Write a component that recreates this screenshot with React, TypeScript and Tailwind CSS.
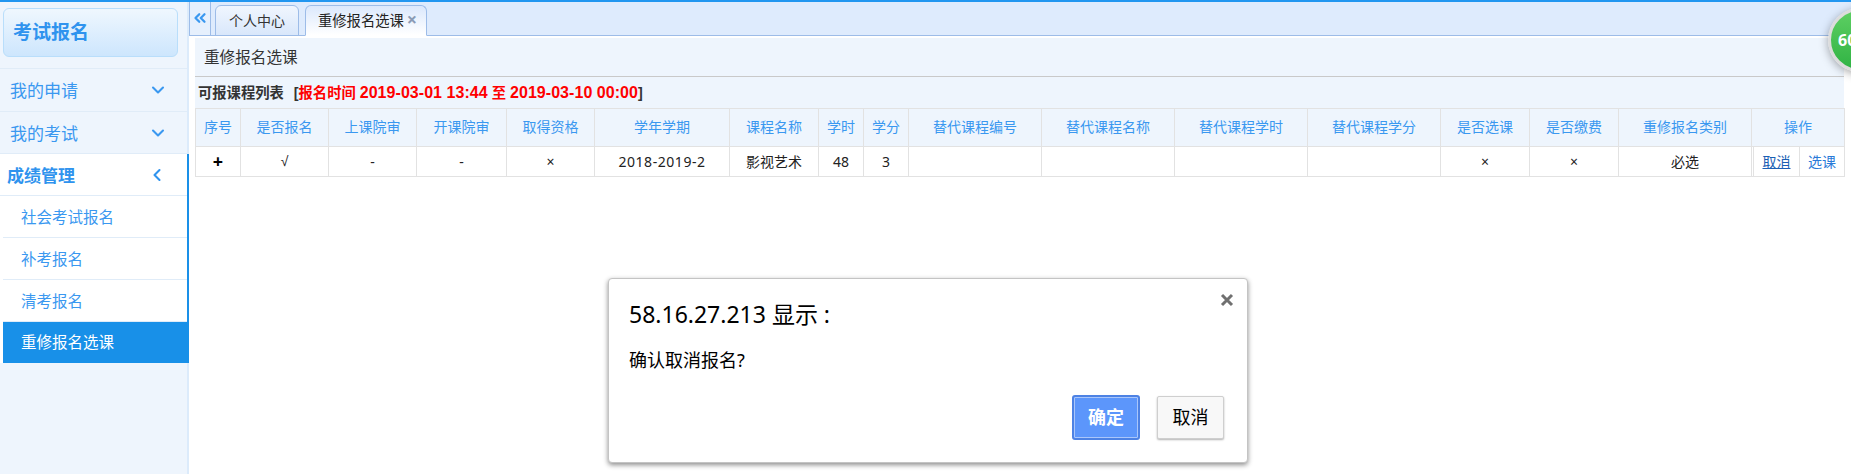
import { ChevronDown, ChevronLeft, ChevronsLeft } from 'lucide-react';

const columns = [
  { title: '序号', width: 'w-[45px]' },
  { title: '是否报名', width: 'w-[88px]' },
  { title: '上课院审', width: 'w-[88px]' },
  { title: '开课院审', width: 'w-[90px]' },
  { title: '取得资格', width: 'w-[88px]' },
  { title: '学年学期', width: 'w-[135px]' },
  { title: '课程名称', width: 'w-[89px]' },
  { title: '学时', width: 'w-[45px]' },
  { title: '学分', width: 'w-[45px]' },
  { title: '替代课程编号', width: 'w-[133px]' },
  { title: '替代课程名称', width: 'w-[133px]' },
  { title: '替代课程学时', width: 'w-[133px]' },
  { title: '替代课程学分', width: 'w-[133px]' },
  { title: '是否选课', width: 'w-[89px]' },
  { title: '是否缴费', width: 'w-[89px]' },
  { title: '重修报名类别', width: 'w-[133px]' },
  { title: '操作', width: 'w-[93px]' },
];

const row = ['-', '-', '×'];
const rowRest = ['影视艺术', '48', '3', '', '', '', '', '×', '×', '必选'];

const subMenu = ['社会考试报名', '补考报名', '清考报名'];

function Sidebar() {
  return (
    <aside className="w-[189px] shrink-0 bg-[#eef5fd] border-r-2 border-[#dcebfb] flex flex-col">
      <div className="h-[67px] pl-[3px] pr-[9px] pt-[6px] border-b border-[#e0ecf8]">
        <div className="h-[49px] flex items-center pl-[9px] rounded-md border border-[#b9defb] bg-gradient-to-b from-[#eff7fe] to-[#cde6fd] text-[19px] font-bold text-[#2f93ee]">
          考试报名
        </div>
      </div>
      <div className="h-[43px] flex items-center justify-between pl-[10px] pr-[19px] border-b border-[#e0ecf8] text-[17px] text-[#3a98f0]">
        <span className="pt-[2px]">我的申请</span>
        <ChevronDown className="w-[20px] h-[20px]" strokeWidth={2.5} />
      </div>
      <div className="h-[42px] flex items-center justify-between pl-[10px] pr-[19px] border-b border-[#e0ecf8] text-[17px] text-[#3a98f0]">
        <span className="pt-[2px]">我的考试</span>
        <ChevronDown className="w-[20px] h-[20px]" strokeWidth={2.5} />
      </div>
      <div className="border-r-2 border-[#1a90e8] -mr-[2px] bg-white">
        <div className="h-[42px] flex items-center justify-between pl-[7px] pr-[20px] border-b border-[#e0ecf8] text-[17px] font-bold text-[#2f93ee]">
          <span className="pt-[2px]">成绩管理</span>
          <ChevronLeft className="w-[20px] h-[20px]" strokeWidth={2.5} />
        </div>
        {subMenu.map((item) => (
          <div key={item} className="ml-[3px] h-[42px] flex items-center pl-[18px] pt-[2px] border-b border-[#e0ecf8] text-[15.5px] text-[#3a98f0]">
            {item}
          </div>
        ))}
        <div className="ml-[3px] -mr-[2px] h-[41px] flex items-center pl-[18px] bg-[#1890e8] text-[15.5px] text-white">
          重修报名选课
        </div>
      </div>
    </aside>
  );
}

function Tabs() {
  return (
    <div className="h-[34px] flex items-end bg-[#deebfd] border-b border-[#9dbce8]">
      <div className="w-[22px] h-full flex items-center justify-center bg-[#e6f0fd] border-x border-[#9dbce8] text-[#3a98f0]">
        <ChevronsLeft className="w-[18px] h-[18px] -mt-[2px]" strokeWidth={3} />
      </div>
      <div className="ml-[4px] w-[84px] h-[31px] -mb-px flex items-center justify-center rounded-t-md border border-[#9dbce8] bg-gradient-to-b from-[#f0f6fe] to-[#d9e7fb] text-[14px] text-[#333]">
        个人中心
      </div>
      <div className="ml-[6px] w-[122px] h-[31px] -mb-px flex items-center pl-[12px] rounded-t-md border border-[#9dbce8] border-b-white bg-gradient-to-b from-[#dbe8fc] to-white text-[14.3px] text-[#222]">
        重修报名选课
        <span className="ml-[3px] -mt-[4px] text-[18px] leading-none font-bold text-[#8a9bb5]">×</span>
      </div>
    </div>
  );
}

function CourseTable() {
  const cell = 'border border-[#e2e2e2] text-center text-[14px] p-0';

  return (
    <table className="w-[1649px] table-fixed border-collapse">
      <colgroup>
        {columns.map((col) => (
          <col key={col.title} className={col.width} />
        ))}
      </colgroup>
      <thead>
        <tr className="h-[38px] bg-[#eef5fd]">
          {columns.map((col) => (
            <th key={col.title} className={`${cell} pb-[2px] font-normal text-[#3a98f0]`}>
              {col.title}
            </th>
          ))}
        </tr>
      </thead>
      <tbody>
        <tr className="h-[30px] bg-white text-[#222]">
          <td className={`${cell} text-[18px] font-bold text-black`}>+</td>
          <td className={`${cell} font-['Liberation_Sans',sans-serif]`}>√</td>
          {row.map((value, i) => (
            <td key={i} className={cell}>
              {value}
            </td>
          ))}
          <td className={`${cell} tracking-[0.55px]`}>2018-2019-2</td>
          {rowRest.map((value, i) => (
            <td key={i} className={cell}>
              {value}
            </td>
          ))}
          <td className={cell}>
            <div className="h-[29px] flex items-center pl-px">
              <a className="w-[47px] h-full flex items-center justify-center border-x border-[#e2e2e2] underline text-[#1a5fb4]">
                取消
              </a>
              <a className="flex-1 text-center text-[#2a7ad8]">选课</a>
            </div>
          </td>
        </tr>
      </tbody>
    </table>
  );
}

function ConfirmDialog() {
  return (
    <div className="absolute left-[608px] top-[276px] w-[640px] h-[185px] bg-white rounded border border-[#c4c4c4] shadow-[0_2px_5px_rgba(0,0,0,0.45)] text-black">
      <svg className="absolute right-[13px] top-[14px] w-[14px] h-[14px]" viewBox="0 0 14 14">
        <path d="M2 2L12 12M12 2L2 12" stroke="#707070" strokeWidth="3" />
      </svg>
      <div className="absolute left-[20px] top-[18px] text-[23px] leading-[34px]">58.16.27.213 显示 :</div>
      <div className="flex flex-col h-full pl-[20px] pr-[23px]">
        <div className="mt-[68px] text-[18px] leading-[26px]">确认取消报名?</div>
        <div className="mt-auto mb-[22px] flex justify-end gap-[17px]">
          <button className="w-[68px] h-[45px] rounded-[3px] border-2 border-[#4d82e4] outline outline-1 -outline-offset-3 outline-[#a9c6fb] bg-[#5c96fb] text-[18px] font-bold text-white">
            确定
          </button>
          <button className="w-[67px] h-[43px] mt-px rounded-[2px] border border-[#cfcfcf] bg-[#f8f8f8] shadow-[0_1px_2px_rgba(0,0,0,0.3)] text-[18px] text-black">
            取消
          </button>
        </div>
      </div>
    </div>
  );
}

export default function App() {
  return (
    <div className="relative w-[1851px] h-[474px] overflow-hidden bg-white border-t-2 border-[#2196f0] font-['Noto_Sans','Noto_Sans_CJK_SC',sans-serif]">
      <div className="flex h-full">
        <Sidebar />
        <main className="flex-1 min-w-0">
          <Tabs />
          <div className="pl-[6px] pr-[7px] pt-[2px]">
            <div className="h-[39px] flex items-center pl-[9px] pt-[2px] bg-[#eef5fd] border-b border-[#c9c9c9] text-[15.6px] text-[#333]">
              重修报名选课
            </div>
            <div className="h-[31px] flex items-center pl-[3px] bg-[#eef5fd] text-[14.3px] font-bold text-[#333] whitespace-pre">
              可报课程列表
              <span className="ml-[10px] font-['Liberation_Sans','Noto_Sans_CJK_SC',sans-serif]">
                [<span className="text-[#ff0000]">报名时间 <span className="text-[16px] tracking-[0.05px]">2019-03-01 13:44</span> 至 <span className="text-[16px] tracking-[0.05px]">2019-03-10 00:00</span></span>]
              </span>
            </div>
            <CourseTable />
          </div>
        </main>
      </div>

      <ConfirmDialog />

      <div className="absolute left-[1828px] top-[6px] w-[64px] h-[64px] pl-[7px] flex items-center rounded-full border-[3px] border-[#dcdcdc] bg-gradient-to-b from-[#5ccf62] to-[#2fb344] shadow-[0_2px_10px_rgba(0,0,0,0.35)] text-[16px] font-bold text-white">
        60
      </div>
    </div>
  );
}
